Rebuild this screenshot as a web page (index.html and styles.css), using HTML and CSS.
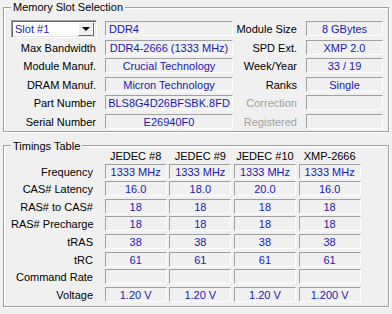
FILE: index.html
```html
<!DOCTYPE html>
<html>
<head>
<meta charset="utf-8">
<link rel="stylesheet" href="styles.css">
</head>
<body>
<fieldset class="group group-slot">
  <legend class="group-title">Memory Slot Selection</legend>
  <div class="slot-grid">
    <div class="combo"><span class="combo-text">Slot #1</span><span class="combo-btn"><span class="combo-arrow"></span></span></div>
    <div class="field field-left">DDR4</div>
    <div class="label">Module Size</div>
    <div class="field">8 GBytes</div>

    <div class="label">Max Bandwidth</div>
    <div class="field">DDR4-2666 (1333 MHz)</div>
    <div class="label">SPD Ext.</div>
    <div class="field">XMP 2.0</div>

    <div class="label">Module Manuf.</div>
    <div class="field">Crucial Technology</div>
    <div class="label">Week/Year</div>
    <div class="field">33 / 19</div>

    <div class="label">DRAM Manuf.</div>
    <div class="field">Micron Technology</div>
    <div class="label">Ranks</div>
    <div class="field">Single</div>

    <div class="label">Part Number</div>
    <div class="field">BLS8G4D26BFSBK.8FD</div>
    <div class="label label-off">Correction</div>
    <div class="field"></div>

    <div class="label">Serial Number</div>
    <div class="field">E26940F0</div>
    <div class="label label-off">Registered</div>
    <div class="field"></div>
  </div>
</fieldset>

<fieldset class="group group-timings">
  <legend class="group-title">Timings Table</legend>
  <div class="timing-grid">
    <div class="head-spacer"></div>
    <div class="col-head">JEDEC #8</div>
    <div class="col-head">JEDEC #9</div>
    <div class="col-head">JEDEC #10</div>
    <div class="col-head">XMP-2666</div>

    <div class="label">Frequency</div>
    <div class="field">1333 MHz</div>
    <div class="field">1333 MHz</div>
    <div class="field">1333 MHz</div>
    <div class="field">1333 MHz</div>

    <div class="label">CAS# Latency</div>
    <div class="field">16.0</div>
    <div class="field">18.0</div>
    <div class="field">20.0</div>
    <div class="field">16.0</div>

    <div class="label">RAS# to CAS#</div>
    <div class="field">18</div>
    <div class="field">18</div>
    <div class="field">18</div>
    <div class="field">18</div>

    <div class="label">RAS# Precharge</div>
    <div class="field">18</div>
    <div class="field">18</div>
    <div class="field">18</div>
    <div class="field">18</div>

    <div class="label">tRAS</div>
    <div class="field">38</div>
    <div class="field">38</div>
    <div class="field">38</div>
    <div class="field">38</div>

    <div class="label">tRC</div>
    <div class="field">61</div>
    <div class="field">61</div>
    <div class="field">61</div>
    <div class="field">61</div>

    <div class="label">Command Rate</div>
    <div class="field"></div>
    <div class="field"></div>
    <div class="field"></div>
    <div class="field"></div>

    <div class="label">Voltage</div>
    <div class="field">1.20 V</div>
    <div class="field">1.20 V</div>
    <div class="field">1.20 V</div>
    <div class="field">1.200 V</div>
  </div>
</fieldset>
</body>
</html>
```

FILE: styles.css
```css
html, body {
  margin: 0;
  padding: 0;
}

body {
  width: 392px;
  height: 314px;
  overflow: hidden;
  background: #f0f0f0;
  font-family: "Liberation Sans", Arial, sans-serif;
  font-size: 11px;
  color: #000;
}

.group {
  margin: 0 3px;
  padding: 0;
  min-width: 0;
  border: 1px solid #a0a0a0;
  box-shadow: inset 1px 1px 0 #fff, 1px 1px 0 #fff;
}

.group-title {
  margin-left: 7px;
  padding: 1px 2px 0;
  line-height: 13px;
  background: #f0f0f0;
  white-space: nowrap;
}

.group-timings {
  margin-top: 7px;
}

.slot-grid {
  display: grid;
  grid-template-columns: 94px 128px 73px 77px;
  grid-auto-rows: 15px;
  row-gap: 3.6px;
  padding: 7px 0 2px 7px;
}

.label {
  height: 15px;
  box-sizing: border-box;
  padding: 1px 9px 0 0;
  line-height: 14px;
  text-align: right;
  white-space: nowrap;
}

.label-off {
  color: #a0a0a0;
}

.field {
  height: 15px;
  box-sizing: border-box;
  padding-top: 1px;
  line-height: 12px;
  border-top: 1px solid #a0a0a0;
  border-left: 1px solid #a0a0a0;
  border-bottom: 1px solid #fff;
  border-right: 1px solid #fff;
  color: #1a1ab0;
  text-align: center;
  white-space: nowrap;
  overflow: hidden;
}

.field-left {
  text-align: left;
  padding-left: 3px;
}

.combo {
  display: flex;
  align-items: center;
  width: 86px;
  height: 18px;
  margin-top: -1px;
  box-sizing: border-box;
  background: #fff;
  border-top: 1px solid #a0a0a0;
  border-left: 1px solid #a0a0a0;
  border-bottom: 1px solid #fff;
  border-right: 1px solid #fff;
  box-shadow: inset 1px 1px 0 #696969, inset -1px -1px 0 #e3e3e3;
}

.combo-text {
  flex: 1;
  padding-left: 3px;
  color: #1a1ab0;
  line-height: 14px;
  white-space: nowrap;
}

.combo-btn {
  display: flex;
  align-items: center;
  justify-content: center;
  width: 16px;
  height: 14px;
  margin-right: 2px;
  box-sizing: border-box;
  background: #f0f0f0;
  border-top: 1px solid #fff;
  border-left: 1px solid #fff;
  border-right: 1px solid #696969;
  border-bottom: 1px solid #696969;
}

.combo-arrow {
  width: 0;
  height: 0;
  border-left: 4px solid transparent;
  border-right: 4px solid transparent;
  border-top: 4px solid #000;
}

.timing-grid {
  display: grid;
  grid-template-columns: 91px repeat(4, 62px);
  column-gap: 2.67px;
  grid-template-rows: 10px;
  grid-auto-rows: 15px;
  row-gap: 2.6px;
  padding: 0 0 4px 7px;
  margin-top: -2px;
}

.col-head {
  line-height: 11px;
  text-align: center;
  white-space: nowrap;
}
```
